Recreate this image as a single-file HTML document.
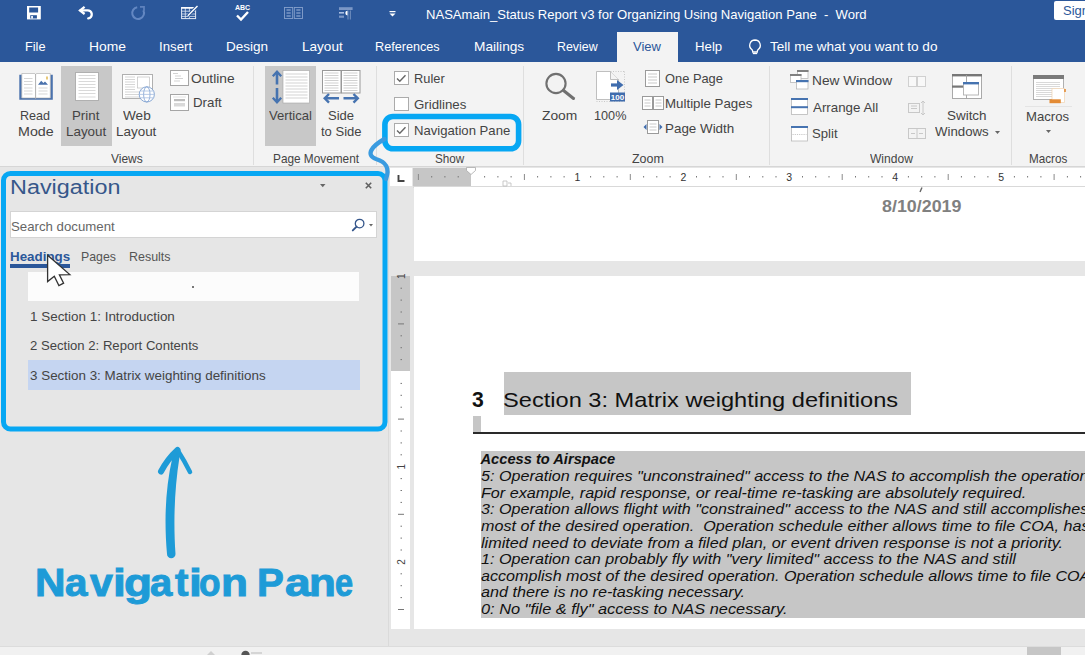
<!DOCTYPE html>
<html><head><meta charset="utf-8"><style>
html,body{margin:0;padding:0;}
body{width:1085px;height:655px;position:relative;overflow:hidden;background:#e6e6e6;font-family:"Liberation Sans", sans-serif;}
.t{position:absolute;white-space:pre;transform-origin:0 0;}
</style></head><body>
<div style="position:absolute;left:0px;top:0px;width:1085.00px;height:62.00px;background:#2b579a;"></div>
<svg style="position:absolute;left:27px;top:6.4px;overflow:visible" width="14" height="14" viewBox="0 0 14 14"><rect x="0" y="0" width="13.8" height="13.4" fill="#fff"/><rect x="2.2" y="1.5" width="8.9" height="5" fill="#2b579a"/><rect x="3.2" y="9.2" width="6.7" height="3.3" fill="#2b579a"/><rect x="4.1" y="10" width="1.9" height="2.6" fill="#e8eef8"/></svg>
<svg style="position:absolute;left:0px;top:0px;overflow:visible" width="1085" height="655" viewBox="0 0 1085 655"><path d="M84.6 6.8L80 10.4L84.6 14" stroke="#fff" stroke-width="2.3" fill="none"/><path d="M80.5 10.4H87.3A4 4 0 0 1 88.2 18.4" stroke="#fff" stroke-width="2.3" fill="none" stroke-linecap="round"/></svg>
<svg style="position:absolute;left:0px;top:0px;overflow:visible" width="1085" height="655" viewBox="0 0 1085 655"><path d="M137.2 7.2A5.9 5.9 0 1 0 143.3 10.2" stroke="#6387c2" stroke-width="2" fill="none"/><path d="M140 6.9H144V10.8" stroke="#5f82bd" stroke-width="1.8" fill="none"/></svg>
<svg style="position:absolute;left:181px;top:5px;overflow:visible" width="18" height="14" viewBox="0 0 18 14"><g stroke="#e4ebf6" fill="none"><rect x="0.6" y="2.6" width="14" height="11" stroke-width="1"/><path d="M0.6 6.2h14M0.6 9h14M0.6 11.4h14M4.3 2.6v11M8.4 2.6v11" stroke-width="0.8"/></g><rect x="0.1" y="2.1" width="15" height="1.6" fill="#fff"/><path d="M6.8 10.8L16.5 1" stroke="#2b579a" stroke-width="3.2"/><path d="M6.8 10.8L16.5 1" stroke="#fff" stroke-width="1.4"/></svg>
<div style="position:absolute;left:235px;top:4px;font-size:7px;font-weight:bold;color:#fff;letter-spacing:0;">ABC</div>
<svg style="position:absolute;left:236px;top:11px;overflow:visible" width="13" height="10" viewBox="0 0 13 10"><path d="M1 4.5L5 8.5L12 1" stroke="#fff" stroke-width="2.4" fill="none"/></svg>
<svg style="position:absolute;left:284px;top:7px;overflow:visible" width="19" height="12" viewBox="0 0 19 12"><g stroke="#86a0cc" stroke-width="0.9" fill="none"><rect x="0.5" y="0.5" width="8.2" height="11"/><rect x="10.3" y="0.5" width="8.2" height="11"/></g><g stroke="#a3b8dc" stroke-width="1"><path d="M2.5 3h4.2M2.5 6h4.2M2.5 9h4.2M12.3 3h4.2M12.3 6h4.2M12.3 9h4.2"/></g></svg>
<svg style="position:absolute;left:338px;top:7px;overflow:visible" width="15" height="12" viewBox="0 0 15 12"><rect x="1" y="0.2" width="13.6" height="2.8" fill="#7b97c6"/><rect x="1" y="5" width="5" height="1.6" fill="#aabfe2"/><rect x="1" y="8.6" width="5" height="2.2" fill="#7b97c6"/><path d="M9.6 3.8a2.3 2.3 0 0 0 0 4.6z" fill="#fff"/><path d="M10 3.5v9M12.3 3.5v9" stroke="#8aa3cc" stroke-width="0.8"/></svg>
<svg style="position:absolute;left:389px;top:11px;overflow:visible" width="7" height="6" viewBox="0 0 7 6"><rect x="0.5" y="0" width="6" height="1.2" fill="#fff"/><path d="M0.5 2.5h6l-3 3z" fill="#fff"/></svg>
<div class="t" id="t1" style="left:426.09px;top:8.05px;font-size:13px;line-height:13px;color:white;font-weight:normal;font-style:normal;transform:scaleX(1.0050);">NASAmain_Status Report v3 for Organizing Using Navigation Pane  -  Word</div>
<div style="position:absolute;left:1054px;top:1px;width:31.00px;height:19.00px;background:#fff;border-radius:2px 0 0 2px;"></div>
<div class="t" id="t2" style="left:1063.00px;top:4.35px;font-size:13px;line-height:13px;color:#2b579a;font-weight:normal;font-style:normal;">Sign</div>
<div class="t" id="t3" style="left:25.43px;top:40.45px;font-size:13px;line-height:13px;color:white;font-weight:normal;font-style:normal;transform:scaleX(0.9791);">File</div>
<div class="t" id="t4" style="left:88.63px;top:40.45px;font-size:13px;line-height:13px;color:white;font-weight:normal;font-style:normal;transform:scaleX(1.0667);">Home</div>
<div class="t" id="t5" style="left:159.16px;top:40.45px;font-size:13px;line-height:13px;color:white;font-weight:normal;font-style:normal;transform:scaleX(1.0198);">Insert</div>
<div class="t" id="t6" style="left:225.87px;top:40.45px;font-size:13px;line-height:13px;color:white;font-weight:normal;font-style:normal;transform:scaleX(1.0411);">Design</div>
<div class="t" id="t7" style="left:301.57px;top:40.45px;font-size:13px;line-height:13px;color:white;font-weight:normal;font-style:normal;transform:scaleX(1.0422);">Layout</div>
<div class="t" id="t8" style="left:375.03px;top:40.45px;font-size:13px;line-height:13px;color:white;font-weight:normal;font-style:normal;transform:scaleX(0.9723);">References</div>
<div class="t" id="t9" style="left:473.55px;top:40.45px;font-size:13px;line-height:13px;color:white;font-weight:normal;font-style:normal;transform:scaleX(1.0525);">Mailings</div>
<div class="t" id="t10" style="left:557.05px;top:40.45px;font-size:13px;line-height:13px;color:white;font-weight:normal;font-style:normal;transform:scaleX(0.9524);">Review</div>
<div class="t" id="t11" style="left:694.98px;top:40.45px;font-size:13px;line-height:13px;color:white;font-weight:normal;font-style:normal;transform:scaleX(1.0169);">Help</div>
<div class="t" id="t12" style="left:770.00px;top:40.45px;font-size:13px;line-height:13px;color:white;font-weight:normal;font-style:normal;transform:scaleX(1.0437);">Tell me what you want to do</div>
<div style="position:absolute;left:617px;top:32px;width:61.00px;height:30.00px;background:#f3f3f3;"></div>
<div class="t" id="t13" style="left:633.00px;top:40.45px;font-size:13px;line-height:13px;color:#2b579a;font-weight:normal;font-style:normal;">View</div>
<svg style="position:absolute;left:748px;top:39px;overflow:visible" width="14" height="16" viewBox="0 0 14 16"><path d="M7 1a5.3 5.3 0 0 0-3.2 9.5c0.6 0.5 0.9 1.2 0.9 2V13h4.6v-0.5c0-0.8 0.3-1.5 0.9-2A5.3 5.3 0 0 0 7 1z" stroke="#fff" stroke-width="1.3" fill="none"/><path d="M4.8 14.5h4.4" stroke="#fff" stroke-width="1.3"/></svg>
<div style="position:absolute;left:0px;top:62px;width:1085.00px;height:104.00px;background:#f3f3f3;"></div>
<div style="position:absolute;left:0px;top:166px;width:1085.00px;height:1.00px;background:#d6d6d6;"></div>
<div style="position:absolute;left:253px;top:66px;width:1.00px;height:99.00px;background:#dedede;"></div>
<div style="position:absolute;left:376px;top:66px;width:1.00px;height:99.00px;background:#dedede;"></div>
<div style="position:absolute;left:523px;top:66px;width:1.00px;height:99.00px;background:#dedede;"></div>
<div style="position:absolute;left:769px;top:66px;width:1.00px;height:99.00px;background:#dedede;"></div>
<div style="position:absolute;left:1011px;top:66px;width:1.00px;height:99.00px;background:#dedede;"></div>
<div class="t" id="t14" style="left:111.24px;top:152.15px;font-size:13px;line-height:13px;color:#444;font-weight:normal;font-style:normal;transform:scaleX(0.9218);">Views</div>
<div class="t" id="t15" style="left:272.67px;top:152.15px;font-size:13px;line-height:13px;color:#444;font-weight:normal;font-style:normal;transform:scaleX(0.9085);">Page Movement</div>
<div class="t" id="t16" style="left:434.96px;top:152.15px;font-size:13px;line-height:13px;color:#444;font-weight:normal;font-style:normal;transform:scaleX(0.9002);">Show</div>
<div class="t" id="t17" style="left:632.00px;top:152.15px;font-size:13px;line-height:13px;color:#444;font-weight:normal;font-style:normal;transform:scaleX(0.9582);">Zoom</div>
<div class="t" id="t18" style="left:870.12px;top:152.15px;font-size:13px;line-height:13px;color:#444;font-weight:normal;font-style:normal;transform:scaleX(0.9261);">Window</div>
<div class="t" id="t19" style="left:1029.10px;top:152.15px;font-size:13px;line-height:13px;color:#444;font-weight:normal;font-style:normal;transform:scaleX(0.8978);">Macros</div>
<div style="position:absolute;left:61px;top:66px;width:51.00px;height:80.00px;background:#c8c8c8;"></div>
<div style="position:absolute;left:265px;top:66px;width:51.00px;height:80.00px;background:#c8c8c8;"></div>
<svg style="position:absolute;left:19px;top:73px;overflow:visible" width="34" height="27" viewBox="0 0 34 27"><path d="M0.3 1.7h2.5v23.3h28.5V1.7h2.5v25H0.3z" fill="#4a72ad"/><path d="M2.8 0.5H15.8l0.8 0.8 0.8-0.8H31.3v24.5H17.4l-0.8 0.6-0.8-0.6H2.8z" fill="#fff" stroke="#a8a8a8" stroke-width="0.6"/><path d="M16.6 1v24.5" stroke="#9a9a9a" stroke-width="0.8"/><g stroke="#c4c4c4" stroke-width="0.7"><path d="M5 5.5h8.5M5 8.5h8.5M5 11.5h8.5M5 15h8.5M5 18h8.5M5 21h8.5M19.5 15h9M19.5 18h9M19.5 21h9"/></g><path d="M19 11.8l3.2-4 2.2 2.2 1.6-1.6 3 3.4z" fill="#4a72ad"/><rect x="27" y="3.5" width="2" height="3" fill="#e8c878"/></svg>
<svg style="position:absolute;left:75px;top:72px;overflow:visible" width="24" height="29" viewBox="0 0 24 29"><rect x="0.5" y="0.5" width="23" height="28" fill="#fff" stroke="#b0b0b0"/><g stroke="#c8c8c8" stroke-width="0.7"><path d="M3.5 3.5h17M3.5 6.5h17M3.5 9.5h17M3.5 12.5h17M3.5 15.5h17M3.5 18.5h17M3.5 21.5h17M3.5 25h17"/></g></svg>
<svg style="position:absolute;left:122px;top:74px;overflow:visible" width="32" height="26" viewBox="0 0 32 26"><rect x="0.5" y="0.5" width="30" height="24" fill="#fff" stroke="#b0b0b0"/><rect x="15.5" y="3" width="12" height="11" fill="#fff" stroke="#c0c0c0" stroke-width="0.7"/><g stroke="#c4c4c4" stroke-width="0.7"><path d="M3 3h10M3 5.5h10M3 8h10M3 10.5h10M3 13h10M3 15.5h10M3 18h15M3 20.5h15M3 23h15"/></g><circle cx="24.8" cy="20.4" r="7.6" fill="#fff" stroke="#7ea0d0" stroke-width="0.9"/><ellipse cx="24.8" cy="20.4" rx="3.2" ry="7.6" fill="none" stroke="#7ea0d0" stroke-width="0.8"/><path d="M17.2 20.4h15.2M18.2 17h13.2M18.2 23.8h13.2" stroke="#9ab5dd" stroke-width="0.7"/></svg>
<div class="t" id="t20" style="left:20.44px;top:109.35px;font-size:13px;line-height:13px;color:#444;font-weight:normal;font-style:normal;transform:scaleX(0.9658);">Read</div>
<div class="t" id="t21" style="left:17.96px;top:124.85px;font-size:13px;line-height:13px;color:#444;font-weight:normal;font-style:normal;transform:scaleX(1.0970);">Mode</div>
<div class="t" id="t22" style="left:72.28px;top:109.35px;font-size:13px;line-height:13px;color:#444;font-weight:normal;font-style:normal;transform:scaleX(1.0232);">Print</div>
<div class="t" id="t23" style="left:66.27px;top:124.85px;font-size:13px;line-height:13px;color:#444;font-weight:normal;font-style:normal;transform:scaleX(1.0316);">Layout</div>
<div class="t" id="t24" style="left:123.17px;top:109.35px;font-size:13px;line-height:13px;color:#444;font-weight:normal;font-style:normal;transform:scaleX(1.0462);">Web</div>
<div class="t" id="t25" style="left:116.13px;top:124.85px;font-size:13px;line-height:13px;color:#444;font-weight:normal;font-style:normal;transform:scaleX(1.0337);">Layout</div>
<svg style="position:absolute;left:170px;top:70px;overflow:visible" width="19" height="16" viewBox="0 0 19 16"><rect x="0.5" y="0.5" width="18" height="15" fill="#fff" stroke="#a5a5a5"/><g stroke="#c0c0c0" stroke-width="0.7"><path d="M3 3.5h5M5 6h6M5 8.5h8M4 11h6"/></g></svg>
<div class="t" id="t26" style="left:191.35px;top:72.05px;font-size:13px;line-height:13px;color:#444;font-weight:normal;font-style:normal;transform:scaleX(1.0594);">Outline</div>
<svg style="position:absolute;left:170px;top:94px;overflow:visible" width="19" height="17" viewBox="0 0 19 17"><rect x="0.5" y="0.5" width="18" height="16" fill="#fff" stroke="#a5a5a5"/><rect x="4" y="5" width="11" height="2.2" fill="#bdbdbd"/><rect x="4" y="9" width="11" height="3.5" fill="#d9d9d9"/><path d="M3 3h13" stroke="#d0d0d0" stroke-width="0.6"/></svg>
<div class="t" id="t27" style="left:192.58px;top:96.45px;font-size:13px;line-height:13px;color:#444;font-weight:normal;font-style:normal;transform:scaleX(1.0223);">Draft</div>
<svg style="position:absolute;left:272px;top:70px;overflow:visible" width="38" height="34" viewBox="0 0 38 34"><rect x="11" y="0.5" width="26.5" height="32.5" fill="#fff" stroke="#a5a5a5" stroke-width="0.6"/><g stroke="#c8c8c8" stroke-width="0.8"><path d="M13.5 4h22M13.5 7h22M13.5 10h22M13.5 13h22M13.5 16h22M13.5 19h22M13.5 22h22M13.5 25h22M13.5 28h22"/></g><path d="M5 2v12.5M5 18v14" stroke="#4673b0" stroke-width="2.6"/><path d="M0.8 6.3l4.2-4.5 4.2 4.5M0.8 27.7l4.2 4.5 4.2-4.5" stroke="#4673b0" stroke-width="2.3" fill="none"/></svg>
<div class="t" id="t28" style="left:269.18px;top:109.25px;font-size:13px;line-height:13px;color:#444;font-weight:normal;font-style:normal;transform:scaleX(1.0060);">Vertical</div>
<svg style="position:absolute;left:321px;top:70px;overflow:visible" width="40" height="33" viewBox="0 0 40 33"><rect x="1.5" y="0.5" width="18.5" height="22.5" fill="#fff" stroke="#999" stroke-width="1"/><rect x="20.5" y="0.5" width="18.5" height="22.5" fill="#fff" stroke="#999" stroke-width="1"/><g stroke="#c4c4c4" stroke-width="0.8"><path d="M3.5 3h14M3.5 5.5h14M3.5 8h14M3.5 10.5h14M3.5 13h14M3.5 15.5h14M3.5 18h14M3.5 20.5h14M22.5 3h14M22.5 5.5h14M22.5 8h14M22.5 10.5h14M22.5 13h14M22.5 15.5h14M22.5 18h14M22.5 20.5h14"/></g><path d="M4 28.3h14M22.5 28.3h14" stroke="#4673b0" stroke-width="2.6"/><path d="M8 24l-4.3 4.3 4.3 4.3M32.5 24l4.3 4.3-4.3 4.3" stroke="#4673b0" stroke-width="2.4" fill="none"/></svg>
<div class="t" id="t29" style="left:328.09px;top:109.25px;font-size:13px;line-height:13px;color:#444;font-weight:normal;font-style:normal;transform:scaleX(1.0004);">Side</div>
<div class="t" id="t30" style="left:321.00px;top:124.75px;font-size:13px;line-height:13px;color:#444;font-weight:normal;font-style:normal;transform:scaleX(1.0002);">to Side</div>
<div style="position:absolute;left:394px;top:71px;width:14.50px;height:14.00px;background:#fff;border:1px solid #ababab;box-sizing:border-box;"></div>
<svg style="position:absolute;left:396px;top:74px;overflow:visible" width="11" height="9" viewBox="0 0 11 9"><path d="M1 4.5L3.8 7.3L9.5 1.2" stroke="#666" stroke-width="1.4" fill="none"/></svg>
<div style="position:absolute;left:394px;top:97px;width:14.50px;height:14.00px;background:#fff;border:1px solid #ababab;box-sizing:border-box;"></div>
<div style="position:absolute;left:394px;top:123px;width:14.50px;height:14.00px;background:#fff;border:1px solid #ababab;box-sizing:border-box;"></div>
<svg style="position:absolute;left:396px;top:126px;overflow:visible" width="11" height="9" viewBox="0 0 11 9"><path d="M1 4.5L3.8 7.3L9.5 1.2" stroke="#666" stroke-width="1.4" fill="none"/></svg>
<div class="t" id="t31" style="left:414.01px;top:72.05px;font-size:13px;line-height:13px;color:#444;font-weight:normal;font-style:normal;transform:scaleX(0.9867);">Ruler</div>
<div class="t" id="t32" style="left:413.98px;top:98.35px;font-size:13px;line-height:13px;color:#444;font-weight:normal;font-style:normal;transform:scaleX(1.0201);">Gridlines</div>
<div class="t" id="t33" style="left:413.99px;top:124.15px;font-size:13px;line-height:13px;color:#444;font-weight:normal;font-style:normal;transform:scaleX(1.0085);">Navigation Pane</div>
<svg style="position:absolute;left:540px;top:68px;overflow:visible" width="40" height="40" viewBox="0 0 40 40"><circle cx="16" cy="15.5" r="9.6" fill="none" stroke="#707070" stroke-width="2.1"/><path d="M23.5 22.5L33.5 30.5" stroke="#707070" stroke-width="3" stroke-linecap="round"/></svg>
<div class="t" id="t34" style="left:541.85px;top:108.95px;font-size:13px;line-height:13px;color:#444;font-weight:normal;font-style:normal;transform:scaleX(1.0627);">Zoom</div>
<svg style="position:absolute;left:596px;top:71px;overflow:visible" width="30" height="31" viewBox="0 0 30 31"><path d="M0.5 0.5H14.5L22.5 8.5V28.5H0.5Z" fill="#fff" stroke="#b0b0b0" stroke-width="0.8"/><path d="M14.5 0.5V8.5H22.5" fill="#f4f4f4" stroke="#b0b0b0" stroke-width="0.8"/><path d="M28.5 0.5V30.5M0.5 30.5H28.5M14.5 0.5H28.5" stroke="#bdbdbd" stroke-dasharray="1 1.5" stroke-width="0.8"/><path d="M15 14H23" stroke="#3f6cad" stroke-width="3.2"/><path d="M21 9L27.5 14L21 19Z" fill="#3f6cad"/><rect x="14" y="21.5" width="15" height="9" fill="#3f6cad"/><text x="21.5" y="29.3" font-size="8" font-weight="bold" fill="#fff" text-anchor="middle" font-family="Liberation Sans">100</text></svg>
<div class="t" id="t35" style="left:593.92px;top:108.95px;font-size:13px;line-height:13px;color:#444;font-weight:normal;font-style:normal;transform:scaleX(0.9750);">100%</div>
<svg style="position:absolute;left:645px;top:70px;overflow:visible" width="15" height="17" viewBox="0 0 15 17"><rect x="0.5" y="0.5" width="14" height="16" fill="#fff" stroke="#9a9a9a"/><g stroke="#bbb" stroke-width="0.8"><path d="M3 4h9M3 7h9M3 10h9M3 13h9"/></g></svg>
<div class="t" id="t36" style="left:665.01px;top:72.05px;font-size:13px;line-height:13px;color:#444;font-weight:normal;font-style:normal;transform:scaleX(0.9895);">One Page</div>
<svg style="position:absolute;left:642px;top:96px;overflow:visible" width="22" height="14" viewBox="0 0 22 14"><rect x="0.5" y="0.5" width="10" height="13" fill="#fff" stroke="#9a9a9a"/><rect x="11.5" y="0.5" width="10" height="13" fill="#fff" stroke="#9a9a9a"/><g stroke="#bbb" stroke-width="0.8"><path d="M2.5 4h6M2.5 7h6M2.5 10h6M13.5 4h6M13.5 7h6M13.5 10h6"/></g></svg>
<div class="t" id="t37" style="left:664.98px;top:96.75px;font-size:13px;line-height:13px;color:#444;font-weight:normal;font-style:normal;transform:scaleX(1.0238);">Multiple Pages</div>
<svg style="position:absolute;left:643px;top:120px;overflow:visible" width="20" height="14" viewBox="0 0 20 14"><rect x="4.5" y="0.5" width="11" height="13" fill="#fff" stroke="#9a9a9a"/><g stroke="#bbb" stroke-width="0.8"><path d="M6.5 4h7M6.5 7h7M6.5 10h7"/></g><path d="M3.5 4v6l-3-3zM16.5 4v6l3-3z" fill="#3f6cad"/></svg>
<div class="t" id="t38" style="left:664.97px;top:121.65px;font-size:13px;line-height:13px;color:#444;font-weight:normal;font-style:normal;transform:scaleX(1.0304);">Page Width</div>
<svg style="position:absolute;left:790px;top:70px;overflow:visible" width="19" height="20" viewBox="0 0 19 20"><rect x="7.5" y="0.5" width="10.5" height="8" fill="#fff" stroke="#b8b8b8" stroke-width="0.8"/><rect x="7" y="0" width="11.5" height="2" fill="#808080"/><rect x="0.5" y="4.5" width="10.5" height="8" fill="#fff" stroke="#b8b8b8" stroke-width="0.8"/><rect x="0" y="4" width="11.5" height="2" fill="#808080"/><rect x="6.5" y="10.5" width="11.5" height="8.5" fill="#fff" stroke="#b8b8b8" stroke-width="0.8"/><rect x="6" y="10" width="12.5" height="2.2" fill="#4673b0"/></svg>
<div class="t" id="t39" style="left:811.56px;top:74.35px;font-size:13px;line-height:13px;color:#444;font-weight:normal;font-style:normal;transform:scaleX(1.0560);">New Window</div>
<svg style="position:absolute;left:791px;top:98px;overflow:visible" width="17" height="17" viewBox="0 0 17 17"><rect x="0.5" y="0.5" width="16" height="16" fill="#fff" stroke="#b8b8b8" stroke-width="0.8"/><rect x="0" y="0" width="17" height="2" fill="#4673b0"/><rect x="0" y="8.2" width="17" height="2" fill="#4673b0"/></svg>
<div class="t" id="t40" style="left:812.61px;top:100.95px;font-size:13px;line-height:13px;color:#444;font-weight:normal;font-style:normal;transform:scaleX(1.0254);">Arrange All</div>
<svg style="position:absolute;left:791px;top:125.5px;overflow:visible" width="17" height="15" viewBox="0 0 17 15"><rect x="0.5" y="0.5" width="16" height="14.5" fill="#fff" stroke="#b8b8b8" stroke-width="0.8"/><rect x="0" y="0" width="17" height="2" fill="#4673b0"/><path d="M1.5 8.5h14" stroke="#b0b0b0" stroke-width="0.7" stroke-dasharray="1.2 1"/></svg>
<div class="t" id="t41" style="left:811.59px;top:127.45px;font-size:13px;line-height:13px;color:#444;font-weight:normal;font-style:normal;transform:scaleX(1.0096);">Split</div>
<svg style="position:absolute;left:908px;top:75px;overflow:visible" width="18" height="12" viewBox="0 0 18 12"><g stroke="#d0d0d0" stroke-width="1" fill="#f8f8f8"><rect x="0.5" y="1.5" width="8" height="10"/><rect x="9.5" y="1.5" width="8" height="10"/></g></svg>
<svg style="position:absolute;left:908px;top:100px;overflow:visible" width="18" height="16" viewBox="0 0 18 16"><g stroke="#c8c8c8" stroke-width="1" fill="none"><rect x="0.5" y="3.5" width="11" height="9"/><path d="M3 6h6M3 8.5h6"/><path d="M15 1v14M13 3l2-2 2 2M13 13l2 2 2-2"/></g></svg>
<svg style="position:absolute;left:908px;top:128px;overflow:visible" width="18" height="11" viewBox="0 0 18 11"><g stroke="#c8c8c8" stroke-width="1" fill="none"><rect x="0.5" y="0.5" width="17" height="10"/><path d="M9 0.5v10M3 5.5h4M11 5.5h4"/></g></svg>
<svg style="position:absolute;left:952px;top:74px;overflow:visible" width="30" height="25" viewBox="0 0 30 25"><rect x="0.5" y="0.5" width="29" height="24" fill="#fff" stroke="#a0a0a0" stroke-width="0.9"/><rect x="0" y="0" width="30" height="2.4" fill="#777"/><path d="M14.5 1v23.5" stroke="#a0a0a0" stroke-width="0.9"/><rect x="0" y="11.5" width="14.5" height="2.2" fill="#777"/><rect x="11.5" y="8.5" width="15" height="12.5" fill="#fff" stroke="#b0b0b0" stroke-width="0.9"/><rect x="11" y="8" width="16" height="2.4" fill="#4673b0"/></svg>
<div class="t" id="t42" style="left:946.97px;top:108.85px;font-size:13px;line-height:13px;color:#444;font-weight:normal;font-style:normal;transform:scaleX(1.0327);">Switch</div>
<div class="t" id="t43" style="left:935.49px;top:125.05px;font-size:13px;line-height:13px;color:#444;font-weight:normal;font-style:normal;transform:scaleX(1.0192);">Windows</div>
<svg style="position:absolute;left:995px;top:131px;overflow:visible" width="6" height="4" viewBox="0 0 6 4"><path d="M0 0h5l-2.5 3z" fill="#666"/></svg>
<svg style="position:absolute;left:1033px;top:74.5px;overflow:visible" width="35" height="30" viewBox="0 0 35 30"><rect x="0.5" y="0.5" width="30" height="24" fill="#fff" stroke="#b0b0b0"/><rect x="0" y="0" width="31" height="4" fill="#7a7a7a"/><g stroke="#cfcfcf" stroke-width="0.8"><path d="M3 7.5h24M3 9.5h24M3 11.5h24M3 13.5h24M3 15.5h16M3 17.5h16M3 19.5h16M3 21.5h16"/></g><path d="M19 13.5h12.5v14h-12.5z" fill="#fff" stroke="#f1d2b0" stroke-width="0.7"/><rect x="16.5" y="24.3" width="11.3" height="3.9" fill="#e38b35"/><rect x="31.2" y="14" width="1.6" height="3" fill="#e38b35"/></svg>
<div style="position:absolute;left:1025px;top:106px;width:47.00px;height:1.00px;background:#e4e4e4;"></div>
<div class="t" id="t44" style="left:1026.48px;top:109.75px;font-size:13px;line-height:13px;color:#444;font-weight:normal;font-style:normal;transform:scaleX(1.0101);">Macros</div>
<svg style="position:absolute;left:1046px;top:130px;overflow:visible" width="6" height="4" viewBox="0 0 6 4"><path d="M0 0h5l-2.5 3z" fill="#666"/></svg>
<div style="position:absolute;left:0px;top:167px;width:389.00px;height:479.00px;background:#e6e6e6;"></div>
<div style="position:absolute;left:388px;top:167px;width:1.00px;height:479.00px;background:#dadada;"></div>
<div class="t" id="t45" style="left:10.33px;top:177.00px;font-size:20px;line-height:20px;color:#36578a;font-weight:normal;font-style:normal;transform:scaleX(1.1694);">Navigation</div>
<svg style="position:absolute;left:319.5px;top:184px;overflow:visible" width="6" height="4" viewBox="0 0 6 4"><path d="M0 0h5.5l-2.75 3.2z" fill="#666"/></svg>
<svg style="position:absolute;left:364.5px;top:182.2px;overflow:visible" width="7" height="7" viewBox="0 0 7 7"><path d="M0.8 0.8l5.4 5.4M6.2 0.8l-5.4 5.4" stroke="#606060" stroke-width="1.6"/></svg>
<div style="position:absolute;left:10px;top:211px;width:367.00px;height:27.00px;background:#fff;border:1px solid #d4d4d4;box-sizing:border-box;"></div>
<div class="t" id="t46" style="left:10.98px;top:219.95px;font-size:13px;line-height:13px;color:#666;font-weight:normal;font-style:normal;transform:scaleX(1.0178);">Search document</div>
<svg style="position:absolute;left:351px;top:218px;overflow:visible" width="15" height="14" viewBox="0 0 15 14"><circle cx="8.6" cy="5.6" r="4.3" fill="none" stroke="#34558a" stroke-width="1.3"/><path d="M5.6 8.6L1.8 12.4" stroke="#34558a" stroke-width="1.9" stroke-linecap="round"/></svg>
<svg style="position:absolute;left:369px;top:224px;overflow:visible" width="5" height="3" viewBox="0 0 5 3"><path d="M0 0h4l-2 2.5z" fill="#666"/></svg>
<div class="t" id="t47" style="left:9.88px;top:250.25px;font-size:13px;line-height:13px;color:#2b579a;font-weight:bold;font-style:normal;transform:scaleX(1.0281);">Headings</div>
<div style="position:absolute;left:10px;top:264px;width:60.00px;height:3.50px;background:#2b579a;"></div>
<div class="t" id="t48" style="left:80.76px;top:250.25px;font-size:13px;line-height:13px;color:#555;font-weight:normal;font-style:normal;transform:scaleX(0.9487);">Pages</div>
<div class="t" id="t49" style="left:129.04px;top:250.25px;font-size:13px;line-height:13px;color:#555;font-weight:normal;font-style:normal;transform:scaleX(0.9571);">Results</div>
<div style="position:absolute;left:28px;top:272px;width:331.00px;height:28.50px;background:#fcfcfc;"></div>
<div style="position:absolute;left:192px;top:286px;width:2.00px;height:2.00px;background:#777;"></div>
<div class="t" id="t50" style="left:29.97px;top:309.95px;font-size:13px;line-height:13px;color:#444;font-weight:normal;font-style:normal;transform:scaleX(1.0331);">1 Section 1: Introduction</div>
<div class="t" id="t51" style="left:29.99px;top:339.35px;font-size:13px;line-height:13px;color:#444;font-weight:normal;font-style:normal;transform:scaleX(1.0085);">2 Section 2: Report Contents</div>
<div style="position:absolute;left:28px;top:360px;width:331.50px;height:29.50px;background:#c5d5f1;"></div>
<div class="t" id="t52" style="left:29.97px;top:368.85px;font-size:13px;line-height:13px;color:#444;font-weight:normal;font-style:normal;transform:scaleX(1.0317);">3 Section 3: Matrix weighting definitions</div>
<svg style="position:absolute;left:0px;top:0px;overflow:visible" width="1085" height="655" viewBox="0 0 1085 655"><path d="M47.6 255.2L47.6 281.6L54.3 276.3L58.9 285.6L63.6 283.2L59.4 274.8L69.8 274.6Z" fill="#fff" stroke="#333" stroke-width="1.3" stroke-linejoin="miter"/></svg>
<div style="position:absolute;left:389px;top:167px;width:696.00px;height:20.00px;background:#e6e6e6;"></div>
<div style="position:absolute;left:390px;top:168px;width:21.50px;height:18.00px;background:#fff;"></div>
<svg style="position:absolute;left:397px;top:174px;overflow:visible" width="10" height="10" viewBox="0 0 10 10"><path d="M1.5 1v6h6" stroke="#444" stroke-width="1.9" fill="none"/></svg>
<div style="position:absolute;left:413px;top:168px;width:58.00px;height:18.00px;background:#c6c6c6;"></div>
<div style="position:absolute;left:471px;top:168px;width:614.00px;height:18.00px;background:#fff;"></div>
<div style="position:absolute;left:413px;top:185.5px;width:672.00px;height:2.00px;background:#d9d9d9;"></div>
<svg style="position:absolute;left:0px;top:0px;overflow:visible" width="1085" height="655" viewBox="0 0 1085 655"><rect x="417.9" y="174" width="1" height="6" fill="#8a8a8a"/><rect x="431.2" y="176" width="1" height="1.5" fill="#777"/><rect x="444.4" y="176" width="1" height="1.5" fill="#777"/><rect x="457.7" y="176" width="1" height="1.5" fill="#777"/><rect x="484.1" y="176" width="1" height="1.5" fill="#777"/><rect x="497.4" y="176" width="1" height="1.5" fill="#777"/><rect x="510.6" y="176" width="1" height="1.5" fill="#777"/><rect x="523.9" y="174" width="1" height="6" fill="#8a8a8a"/><rect x="537.1" y="176" width="1" height="1.5" fill="#777"/><rect x="550.4" y="176" width="1" height="1.5" fill="#777"/><rect x="563.6" y="176" width="1" height="1.5" fill="#777"/><text x="577.4" y="180.8" font-size="10.5" fill="#333" text-anchor="middle" font-family="Liberation Sans">1</text><rect x="590.1" y="176" width="1" height="1.5" fill="#777"/><rect x="603.3" y="176" width="1" height="1.5" fill="#777"/><rect x="616.6" y="176" width="1" height="1.5" fill="#777"/><rect x="629.8" y="174" width="1" height="6" fill="#8a8a8a"/><rect x="643.1" y="176" width="1" height="1.5" fill="#777"/><rect x="656.3" y="176" width="1" height="1.5" fill="#777"/><rect x="669.6" y="176" width="1" height="1.5" fill="#777"/><text x="683.3" y="180.8" font-size="10.5" fill="#333" text-anchor="middle" font-family="Liberation Sans">2</text><rect x="696.0" y="176" width="1" height="1.5" fill="#777"/><rect x="709.3" y="176" width="1" height="1.5" fill="#777"/><rect x="722.5" y="176" width="1" height="1.5" fill="#777"/><rect x="735.8" y="174" width="1" height="6" fill="#8a8a8a"/><rect x="749.0" y="176" width="1" height="1.5" fill="#777"/><rect x="762.3" y="176" width="1" height="1.5" fill="#777"/><rect x="775.5" y="176" width="1" height="1.5" fill="#777"/><text x="789.2" y="180.8" font-size="10.5" fill="#333" text-anchor="middle" font-family="Liberation Sans">3</text><rect x="802.0" y="176" width="1" height="1.5" fill="#777"/><rect x="815.2" y="176" width="1" height="1.5" fill="#777"/><rect x="828.5" y="176" width="1" height="1.5" fill="#777"/><rect x="841.7" y="174" width="1" height="6" fill="#8a8a8a"/><rect x="855.0" y="176" width="1" height="1.5" fill="#777"/><rect x="868.2" y="176" width="1" height="1.5" fill="#777"/><rect x="881.5" y="176" width="1" height="1.5" fill="#777"/><text x="895.2" y="180.8" font-size="10.5" fill="#333" text-anchor="middle" font-family="Liberation Sans">4</text><rect x="907.9" y="176" width="1" height="1.5" fill="#777"/><rect x="921.2" y="176" width="1" height="1.5" fill="#777"/><rect x="934.4" y="176" width="1" height="1.5" fill="#777"/><rect x="947.7" y="174" width="1" height="6" fill="#8a8a8a"/><rect x="960.9" y="176" width="1" height="1.5" fill="#777"/><rect x="974.2" y="176" width="1" height="1.5" fill="#777"/><rect x="987.4" y="176" width="1" height="1.5" fill="#777"/><text x="1001.1" y="180.8" font-size="10.5" fill="#333" text-anchor="middle" font-family="Liberation Sans">5</text><rect x="1013.9" y="176" width="1" height="1.5" fill="#777"/><rect x="1027.1" y="176" width="1" height="1.5" fill="#777"/><rect x="1040.4" y="176" width="1" height="1.5" fill="#777"/><rect x="1053.6" y="174" width="1" height="6" fill="#8a8a8a"/><rect x="1066.9" y="176" width="1" height="1.5" fill="#777"/><rect x="1080.1" y="176" width="1" height="1.5" fill="#777"/></svg>
<svg style="position:absolute;left:466px;top:167px;overflow:visible" width="10" height="8" viewBox="0 0 10 8"><path d="M0.5 0.5h9v3l-4.5 4l-4.5-4z" fill="#fff" stroke="#aaa" stroke-width="0.8"/></svg>
<svg style="position:absolute;left:501.5px;top:179px;overflow:visible" width="10" height="8" viewBox="0 0 10 8"><path d="M1 7V2h4v5z" fill="#fff" stroke="#bbb" stroke-width="0.8"/><path d="M6 4h3v3" stroke="#bbb" stroke-width="0.8" fill="none"/></svg>
<div style="position:absolute;left:391px;top:276px;width:19.00px;height:95.00px;background:#c6c6c6;"></div>
<div style="position:absolute;left:391px;top:371px;width:19.00px;height:257.50px;background:#fff;"></div>
<svg style="position:absolute;left:0px;top:0px;overflow:visible" width="1085" height="655" viewBox="0 0 1085 655"><text x="0" y="0" font-size="10" fill="#444" text-anchor="middle" font-family="Liberation Sans" transform="translate(404.5 276.3) rotate(-90)">1</text><rect x="400.5" y="287.7" width="1.5" height="1" fill="#777"/><rect x="400.5" y="299.6" width="1.5" height="1" fill="#777"/><rect x="400.5" y="311.5" width="1.5" height="1" fill="#777"/><rect x="398" y="323.4" width="6" height="1" fill="#777"/><rect x="400.5" y="335.3" width="1.5" height="1" fill="#777"/><rect x="400.5" y="347.2" width="1.5" height="1" fill="#777"/><rect x="400.5" y="359.1" width="1.5" height="1" fill="#777"/><rect x="400.5" y="382.9" width="1.5" height="1" fill="#777"/><rect x="400.5" y="394.8" width="1.5" height="1" fill="#777"/><rect x="400.5" y="406.7" width="1.5" height="1" fill="#777"/><rect x="398" y="418.6" width="6" height="1" fill="#777"/><rect x="400.5" y="430.5" width="1.5" height="1" fill="#777"/><rect x="400.5" y="442.4" width="1.5" height="1" fill="#777"/><rect x="400.5" y="454.3" width="1.5" height="1" fill="#777"/><text x="0" y="0" font-size="10" fill="#444" text-anchor="middle" font-family="Liberation Sans" transform="translate(404.5 466.7) rotate(-90)">1</text><rect x="400.5" y="478.1" width="1.5" height="1" fill="#777"/><rect x="400.5" y="490.0" width="1.5" height="1" fill="#777"/><rect x="400.5" y="501.9" width="1.5" height="1" fill="#777"/><rect x="398" y="513.8" width="6" height="1" fill="#777"/><rect x="400.5" y="525.7" width="1.5" height="1" fill="#777"/><rect x="400.5" y="537.6" width="1.5" height="1" fill="#777"/><rect x="400.5" y="549.5" width="1.5" height="1" fill="#777"/><text x="0" y="0" font-size="10" fill="#444" text-anchor="middle" font-family="Liberation Sans" transform="translate(404.5 561.9) rotate(-90)">2</text><rect x="400.5" y="573.3" width="1.5" height="1" fill="#777"/><rect x="400.5" y="585.2" width="1.5" height="1" fill="#777"/><rect x="400.5" y="597.1" width="1.5" height="1" fill="#777"/><rect x="398" y="609.0" width="6" height="1" fill="#777"/></svg>
<div style="position:absolute;left:414px;top:187px;width:671.00px;height:74.00px;background:#fff;"></div>
<div style="position:absolute;left:414px;top:276px;width:671.00px;height:352.50px;background:#fff;"></div>
<div class="t" id="t53" style="left:881.66px;top:199.14px;font-size:15.6px;line-height:15.6px;color:#808080;font-weight:bold;font-style:normal;transform:scaleX(1.1454);">8/10/2019</div>
<svg style="position:absolute;left:918px;top:187px;overflow:visible" width="6" height="6" viewBox="0 0 6 6"><path d="M4 0.5L2 5" stroke="#666" stroke-width="1.4"/></svg>
<div style="position:absolute;left:504px;top:371.5px;width:407.00px;height:43.00px;background:#c6c6c6;"></div>
<div class="t" id="t54" style="left:471.90px;top:389.18px;font-size:21.2px;line-height:21.2px;color:#111;font-weight:bold;font-style:normal;">3</div>
<div class="t" id="t55" style="left:503.22px;top:390.19px;font-size:20.6px;line-height:20.6px;color:#111;font-weight:normal;font-style:normal;transform:scaleX(1.1469);">Section 3: Matrix weighting definitions</div>
<div style="position:absolute;left:473px;top:415.5px;width:8.00px;height:16.50px;background:#c6c6c6;"></div>
<div style="position:absolute;left:472.5px;top:432px;width:612.50px;height:2.00px;background:#2a2a2a;"></div>
<div style="position:absolute;left:480.5px;top:450.5px;width:604.50px;height:167.00px;background:#c6c6c6;"></div>
<div class="t" id="t56" style="left:480.50px;top:452.33px;font-size:14.67px;line-height:14.67px;color:#111;font-weight:normal;font-style:italic;"><b>Access to Airspace</b></div>
<div class="t" id="t57" style="left:480.50px;top:468.97px;font-size:14.67px;line-height:14.67px;color:#111;font-weight:normal;font-style:italic;transform:scaleX(1.1000);">5: Operation requires "unconstrained" access to the NAS to accomplish the operation.</div>
<div class="t" id="t58" style="left:480.50px;top:485.61px;font-size:14.67px;line-height:14.67px;color:#111;font-weight:normal;font-style:italic;transform:scaleX(1.1027);">For example, rapid response, or real-time re-tasking are absolutely required.</div>
<div class="t" id="t59" style="left:480.50px;top:502.25px;font-size:14.67px;line-height:14.67px;color:#111;font-weight:normal;font-style:italic;transform:scaleX(1.1000);">3: Operation allows flight with "constrained" access to the NAS and still accomplishes</div>
<div class="t" id="t60" style="left:480.50px;top:518.89px;font-size:14.67px;line-height:14.67px;color:#111;font-weight:normal;font-style:italic;transform:scaleX(1.1000);">most of the desired operation.  Operation schedule either allows time to file COA, has</div>
<div class="t" id="t61" style="left:480.50px;top:535.53px;font-size:14.67px;line-height:14.67px;color:#111;font-weight:normal;font-style:italic;transform:scaleX(1.1049);">limited need to deviate from a filed plan, or event driven response is not a priority.</div>
<div class="t" id="t62" style="left:480.50px;top:552.17px;font-size:14.67px;line-height:14.67px;color:#111;font-weight:normal;font-style:italic;transform:scaleX(1.1040);">1: Operation can probably fly with "very limited" access to the NAS and still</div>
<div class="t" id="t63" style="left:480.50px;top:568.81px;font-size:14.67px;line-height:14.67px;color:#111;font-weight:normal;font-style:italic;transform:scaleX(1.1000);">accomplish most of the desired operation. Operation schedule allows time to file COA</div>
<div class="t" id="t64" style="left:480.50px;top:585.45px;font-size:14.67px;line-height:14.67px;color:#111;font-weight:normal;font-style:italic;transform:scaleX(1.1036);">and there is no re-tasking necessary.</div>
<div class="t" id="t65" style="left:480.50px;top:602.09px;font-size:14.67px;line-height:14.67px;color:#111;font-weight:normal;font-style:italic;transform:scaleX(1.1152);">0: No "file &amp; fly" access to NAS necessary.</div>
<div style="position:absolute;left:0px;top:646px;width:1085.00px;height:9.00px;background:#f1f1f1;"></div>
<div style="position:absolute;left:0px;top:645.5px;width:1085.00px;height:1.00px;background:#dcdcdc;"></div>
<div style="position:absolute;left:1027px;top:647px;width:34.00px;height:8.00px;background:#c6c6c6;"></div>
<svg style="position:absolute;left:200px;top:646px;overflow:visible" width="70" height="9" viewBox="0 0 70 9"><circle cx="45.5" cy="9" r="4.2" fill="#555"/><path d="M7 9l4-4 4 4z" fill="#cfcfcf"/><rect x="51" y="6" width="11" height="2" fill="#d5d5d5"/></svg>
<svg style="position:absolute;left:0px;top:0px;overflow:visible" width="1085" height="655" viewBox="0 0 1085 655"><rect x="384.9" y="116.5" width="133.7" height="32.3" rx="8" ry="8" fill="none" stroke="#07a7f3" stroke-width="5.6"/><rect x="3.5" y="173.5" width="381.5" height="255.5" rx="7" ry="7" fill="none" stroke="#07a7f3" stroke-width="5"/><path d="M384.5 139 C 372 146, 365 155, 376 159 C 386 162, 390 168, 386 179" fill="none" stroke="#3a9be0" stroke-width="4.3" stroke-linecap="round"/></svg>
<svg style="position:absolute;left:0px;top:0px;overflow:visible" width="1085" height="655" viewBox="0 0 1085 655"><path d="M167 554 C 164.5 525, 164.5 492, 172.5 457 L 177 450 L 179.5 457 C 174 492, 173.5 525, 175.5 554 A 4.25 4.25 0 0 1 167 554 Z" fill="#1e9bd7"/><path d="M161 471.5 C 166 462, 172 455, 177.5 450" fill="none" stroke="#1e9bd7" stroke-width="6" stroke-linecap="round"/><path d="M177.5 450 C 182 457, 186 464, 190 472" fill="none" stroke="#1e9bd7" stroke-width="4.5" stroke-linecap="round"/></svg>
<div class="t" id="t66" style="left:35.19px;top:563.67px;font-size:38.5px;line-height:38.5px;color:#1e9bd7;font-weight:bold;font-style:normal;-webkit-text-stroke:1px #1e9bd7;transform:scaleX(1.0957);">N</div>
<div class="t" id="t67" style="left:65.34px;top:563.67px;font-size:38.5px;line-height:38.5px;color:#1e9bd7;font-weight:bold;font-style:normal;-webkit-text-stroke:1px #1e9bd7;transform:scaleX(1.0476);">a</div>
<div class="t" id="t68" style="left:89.90px;top:563.67px;font-size:38.5px;line-height:38.5px;color:#1e9bd7;font-weight:bold;font-style:normal;-webkit-text-stroke:1px #1e9bd7;transform:scaleX(1.0646);">v</div>
<div class="t" id="t69" style="left:112.69px;top:563.67px;font-size:38.5px;line-height:38.5px;color:#1e9bd7;font-weight:bold;font-style:normal;-webkit-text-stroke:1px #1e9bd7;transform:scaleX(1.2002);">i</div>
<div class="t" id="t70" style="left:123.53px;top:563.67px;font-size:38.5px;line-height:38.5px;color:#1e9bd7;font-weight:bold;font-style:normal;-webkit-text-stroke:1px #1e9bd7;transform:scaleX(1.1903);">g</div>
<div class="t" id="t71" style="left:150.46px;top:563.67px;font-size:38.5px;line-height:38.5px;color:#1e9bd7;font-weight:bold;font-style:normal;-webkit-text-stroke:1px #1e9bd7;transform:scaleX(1.0381);">a</div>
<div class="t" id="t72" style="left:175.00px;top:563.67px;font-size:38.5px;line-height:38.5px;color:#1e9bd7;font-weight:bold;font-style:normal;-webkit-text-stroke:1px #1e9bd7;transform:scaleX(1.0467);">t</div>
<div class="t" id="t73" style="left:188.69px;top:563.67px;font-size:38.5px;line-height:38.5px;color:#1e9bd7;font-weight:bold;font-style:normal;-webkit-text-stroke:1px #1e9bd7;transform:scaleX(1.2002);">i</div>
<div class="t" id="t74" style="left:198.80px;top:563.67px;font-size:38.5px;line-height:38.5px;color:#1e9bd7;font-weight:bold;font-style:normal;-webkit-text-stroke:1px #1e9bd7;transform:scaleX(0.9147);">o</div>
<div class="t" id="t75" style="left:220.81px;top:563.67px;font-size:38.5px;line-height:38.5px;color:#1e9bd7;font-weight:bold;font-style:normal;-webkit-text-stroke:1px #1e9bd7;transform:scaleX(1.1474);">n</div>
<div class="t" id="t76" style="left:257.01px;top:563.67px;font-size:38.5px;line-height:38.5px;color:#1e9bd7;font-weight:bold;font-style:normal;-webkit-text-stroke:1px #1e9bd7;transform:scaleX(1.0440);">P</div>
<div class="t" id="t77" style="left:284.76px;top:563.67px;font-size:38.5px;line-height:38.5px;color:#1e9bd7;font-weight:bold;font-style:normal;-webkit-text-stroke:1px #1e9bd7;transform:scaleX(1.2000);">a</div>
<div class="t" id="t78" style="left:308.67px;top:563.67px;font-size:38.5px;line-height:38.5px;color:#1e9bd7;font-weight:bold;font-style:normal;-webkit-text-stroke:1px #1e9bd7;transform:scaleX(1.1419);">n</div>
<div class="t" id="t79" style="left:334.72px;top:563.67px;font-size:38.5px;line-height:38.5px;color:#1e9bd7;font-weight:bold;font-style:normal;-webkit-text-stroke:1px #1e9bd7;transform:scaleX(0.8429);">e</div>
</body></html>
